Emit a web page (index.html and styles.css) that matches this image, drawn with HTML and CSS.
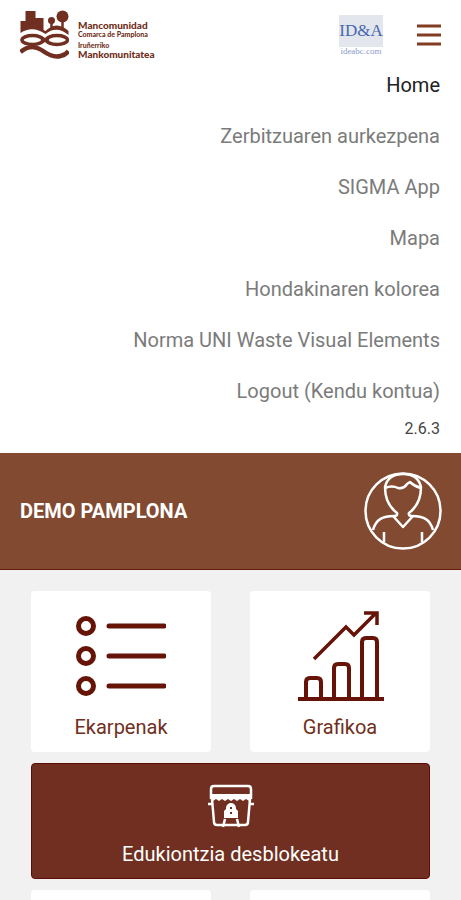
FILE: index.html
```html
<!DOCTYPE html>
<html lang="eu">
<head>
<meta charset="utf-8">
<meta name="viewport" content="width=device-width, initial-scale=1">
<title>Mancomunidad Comarca de Pamplona</title>
<link rel="stylesheet" href="styles.css">
</head>
<body>
<div class="app">
  <header class="topbar">
    <a class="brand" href="#">
      <svg class="brand-mark" viewBox="0 0 48 50" aria-hidden="true">
        <path fill="currentColor" d="M0 23V11H5V1H15V8H23V20L25 21Q30 16 36 15.500Q43 16 48 21V25Q36 15 25 24Q12 15 0 23Z"/>
        <circle cx="31" cy="10.500" r="3.500" fill="currentColor"/>
        <circle cx="42" cy="6.500" r="6" fill="currentColor"/>
        <path d="M31 12V18M42 10V19" stroke="currentColor" stroke-width="2.500"/>
        <g fill="none" stroke="currentColor" stroke-width="3.500">
          <ellipse cx="12" cy="30" rx="10.500" ry="4.500"/>
          <ellipse cx="36.500" cy="30" rx="10.500" ry="4.500"/>
          <path d="M21 28L28 32M21 32L28 28"/>
          <path d="M0 42C7 36 15 36 21 40S33 48 40 46Q45 45 48 41" stroke-width="4.500"/>
        </g>
      </svg>
      <span class="brand-text">
        <span class="brand-main">Mancomunidad</span>
        <span class="brand-sub">Comarca de Pamplona</span>
        <span class="brand-sub brand-second">Iruñerriko</span>
        <span class="brand-main">Mankomunitatea</span>
      </span>
    </a>
    <a class="partner" href="#"><span class="partner-name">ID&amp;A</span><span class="partner-url">ideabc.com</span></a>
    <button class="menu-toggle" type="button" aria-label="Menu" aria-expanded="true">
      <svg viewBox="0 0 24 24" aria-hidden="true"><path d="M0 3H24M0 12H24M0 21H24" stroke="currentColor" stroke-width="3"/></svg>
    </button>
  </header>
  <nav class="menu">
    <a class="active" href="#">Home</a>
    <a href="#">Zerbitzuaren aurkezpena</a>
    <a href="#">SIGMA App</a>
    <a href="#">Mapa</a>
    <a href="#">Hondakinaren kolorea</a>
    <a href="#">Norma UNI Waste Visual Elements</a>
    <a href="#">Logout (Kendu kontua)</a>
    <span class="version">2.6.3</span>
  </nav>
  <section class="user">
    <h1>DEMO PAMPLONA</h1>
    <svg class="avatar" viewBox="0 0 78 78" fill="none" stroke="currentColor" stroke-width="2.5" stroke-linejoin="round" aria-hidden="true">
      <circle cx="39" cy="39" r="37.5"/>
      <path d="M9 58C12 47 19 44 30 44Q34 44 33 41C25 35 21 25 21 15Q24 2 39 2T57 15C57 25 53 35 45 41Q44 44 48 44C59 44 66 47 69 58"/>
      <path d="M21 16Q28 13 34 16Q40 17 43 12L46 10Q50 14 57 16M29 44L39 55L49 44M20 60V70M58 60V70"/>
    </svg>
  </section>
  <main class="tiles">
    <a class="tile" href="#">
      <svg viewBox="0 0 90 90" fill="none" stroke="currentColor" aria-hidden="true">
        <g stroke-width="5"><circle cx="10" cy="15" r="7.5"/><circle cx="10" cy="45" r="7.5"/><circle cx="10" cy="75" r="7.5"/></g>
        <path d="M33 15H88M33 45H88M33 75H88" stroke-width="5" stroke-linecap="round"/>
      </svg>
      <span>Ekarpenak</span>
    </a>
    <a class="tile" href="#">
      <svg viewBox="0 0 90 90" fill="none" stroke="currentColor" stroke-width="4" aria-hidden="true">
        <path d="M3 88H89M11 87V71Q11 67 15 67H22Q26 67 26 71V87M39 87V57Q39 53 43 53H50Q54 53 54 57V87M67 87V31Q67 27 71 27H78Q82 27 82 31V87"/>
        <path d="M19 48L51 16L59 24L81 2M69 2H82V14" stroke-width="3.5"/>
      </svg>
      <span>Grafikoa</span>
    </a>
    <button class="tile unlock" type="button">
      <svg viewBox="0 0 46 44" fill="none" stroke="currentColor" stroke-width="2.5" aria-hidden="true">
        <path d="M3 13V5Q3 2 6 2H40Q43 2 43 5V13M3 12V15M43 12V15M0 20H4M42 20H46M4 15L6 38Q6 41 9 41H15M42 15L40 38Q40 41 37 41H31M15 43L17 35M31 43L29 35M16 41H30"/>
        <path d="M3 10H43V15L41 17L38 15L35 17L32 15L29 17L26 15L23 17L20 15L17 17L14 15L11 17L8 15L5 17L3 15Z" fill="currentColor" stroke="none"/>
        <path fill="currentColor" fill-rule="evenodd" stroke="none" d="M16 34V27L18 25V24A5 5 0 0 1 28 24V25L30 27V34ZM22 25H24V23H22ZM22 28V30H24V28Z"/>
      </svg>
      <span>Edukiontzia desblokeatu</span>
    </button>
    <div class="tile"></div>
    <div class="tile"></div>
  </main>
</div>
</body>
</html>
```
FILE: styles.css
```css
* { box-sizing: border-box; }
body { margin: 0; background: #f1f1f1; font-family: Roboto, sans-serif; color: #212121; }
a { color: inherit; text-decoration: none; }
button { border: 0; padding: 0; background: none; font: inherit; cursor: pointer; }
svg { display: block; }
.app { height: 100vh; overflow: hidden; }
.topbar { display: flex; align-items: center; height: 60px; padding: 10px 20px 0; background: #fff; color: #702f20; }
.brand { display: flex; align-items: center; gap: 9px; margin-right: auto; }
.brand-mark { width: 49px; height: 50px; }
.brand-text { display: flex; flex-direction: column; padding-top: 8px; font-family: Lato, sans-serif; font-weight: 900; }
.brand-main { font-size: 10px; line-height: 10px; }
.brand-sub { font-size: 7px; line-height: 8px; }
.brand-second { padding-top: 3px; }
.partner { display: flex; flex-direction: column; align-items: center; width: 44px; margin-right: 34px; color: #4968b0; font-family: "Liberation Serif", serif; }
.partner-name { width: 100%; height: 32px; background: #e3e6ec; font-size: 17px; line-height: 32px; text-align: center; }
.partner-url { font-size: 9px; line-height: 8px; color: #8a9ccb; }
.menu-toggle { color: #813c22; }
.menu-toggle svg { width: 24px; height: 24px; }
.menu { display: flex; flex-direction: column; align-items: flex-end; padding: 0 21px 12px; background: #fff; }
.menu a { color: #7b7b7b; font-size: 20px; line-height: 51px; }
.menu a.active { color: #212121; }
.version { font-size: 16px; line-height: 24px; color: #444; }
.user { display: flex; align-items: center; justify-content: space-between; height: 117px; padding: 0 19px 0 20px; border-bottom: 1px solid #641c0c; background: #824a30; color: #fff; }
.user h1 { margin: 0; font-size: 20px; font-weight: 700; }
.avatar { width: 78px; height: 78px; }
.tiles { display: grid; grid-template-columns: 1fr 1fr; gap: 11px 39px; padding: 21px 31px; }
.tile { display: flex; flex-direction: column; align-items: center; gap: 10px; height: 161px; padding-top: 20px; border-radius: 4px; background: #fff; color: #702f20; font-size: 20px; line-height: 32px; }
.tile svg { width: 90px; height: 90px; color: #651407; }
.unlock { grid-column: 1 / -1; height: 116px; border: 1px solid #5d0d08; background: #702f20; color: #fff; }
.unlock svg { width: 46px; height: 44px; color: #fff; }
```
